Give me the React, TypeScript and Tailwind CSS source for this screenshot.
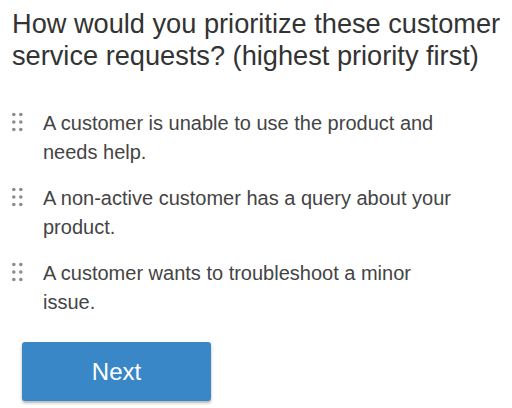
import React from "react";

const items = [
  "A customer is unable to use the product and needs help.",
  "A non-active customer has a query about your product.",
  "A customer wants to troubleshoot a minor issue.",
];

function Handle() {
  return (
    <svg width="14" height="26" viewBox="0 0 14 26" className="shrink-0">
      {[0, 1, 2].map((r) =>
        [0, 1].map((c) => (
          <circle key={`${r}-${c}`} cx={1.8 + c * 7} cy={5.5 + r * 7.5} r={1.8} fill="#8c8c8c" />
        ))
      )}
    </svg>
  );
}

export default function App() {
  return (
    <div className="w-[512px] h-[408px] bg-white overflow-hidden" style={{ fontFamily: '"Liberation Sans", Arial, sans-serif' }}>
      <div className="pl-[12px] pt-[8px] pr-1">
        <h1 className="text-[27.2px] leading-[32px] text-[#333333] font-normal">
          How would you prioritize these customer service requests? (highest priority first)
        </h1>
        <div className="mt-[37px] flex flex-col gap-[17px]">
          {items.map((t) => (
            <div key={t} className="flex items-start">
              <div className="w-[31px]">
                <Handle />
              </div>
              <p className="text-[20px] leading-[29px] text-[#444444] w-[412px]">{t}</p>
            </div>
          ))}
        </div>
        <div className="mt-[25px] pl-[10px]">
          <button className="w-[189px] h-[59px] bg-[#3a87c8] text-white text-[24px] rounded-[3px] shadow-[0_2px_3px_rgba(0,0,0,0.3)]">
            Next
          </button>
        </div>
      </div>
    </div>
  );
}
